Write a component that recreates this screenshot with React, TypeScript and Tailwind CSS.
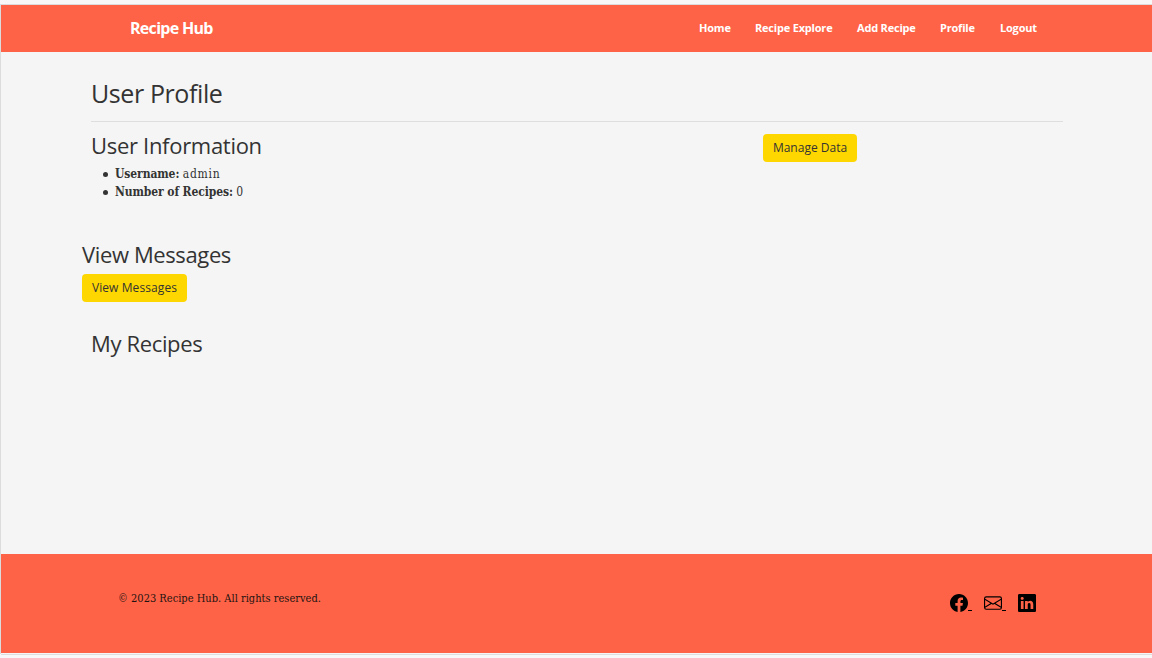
import { BsEnvelope, BsFacebook, BsLinkedin } from "react-icons/bs";

const sans = "font-['Open_Sans',sans-serif]";
const serif = "font-['DejaVu_Serif_Condensed','DejaVu_Serif',serif]";

const links = [
  { label: "Home", style: "w-[32px]" },
  { label: "Recipe Explore", style: "w-[78px]" },
  { label: "Add Recipe", style: "w-[59px]" },
  { label: "Profile", style: "w-[36px]" },
  { label: "Logout", style: "w-[37px]" },
];

function Header() {
  return (
    <header className={`flex h-[47px] items-center justify-between bg-[#ff6347] pl-[129px] pr-[115px] font-bold text-white ${sans}`}>
      <a className="-mt-[2px] whitespace-nowrap text-[16px] tracking-[-0.7px]">Recipe Hub</a>
      <nav className="flex gap-6 text-[11px] tracking-[-0.2px]">
        {links.map((l) => (
          <a key={l.label} className={`whitespace-nowrap ${l.style}`}>{l.label}</a>
        ))}
      </nav>
    </header>
  );
}

function Footer() {
  return (
    <footer className="flex h-[99px] items-start justify-between bg-[#ff6347] pl-[117px] pr-[116px] text-[#1c1311]">
      <p className={`mt-[36px] whitespace-nowrap text-[11px] leading-[18px] ${serif}`}>© 2023 Recipe Hub. All rights reserved.</p>
      <div className="mt-[40px] flex text-black">
        <a className="flex w-[34px] items-end"><BsFacebook size={18} /><span className="mb-px h-px w-[4px] bg-black" /></a>
        <a className="flex w-[34px] items-end"><BsEnvelope size={18} /><span className="mb-px h-px w-[4px] bg-black" /></a>
        <a><BsLinkedin size={18} /></a>
      </div>
    </footer>
  );
}

function Button({ children, className }: { children: string; className: string }) {
  return (
    <button className={`flex h-[28px] items-center justify-center whitespace-nowrap rounded-[4px] bg-[#ffd700] text-[12px] text-[#333] ${sans} ${className}`}>
      {children}
    </button>
  );
}

export default function App() {
  return (
    <div className="flex h-[658px] flex-col bg-[#f8f8f8] pt-1 text-[#333]">
      <div className="flex h-[650px] flex-col border-l border-t border-[#dcdcdc] bg-[#f5f5f5]">
        <Header />
        <main className="h-[502px] pl-[81px] pr-[89px]">
          <h1 className={`ml-[9px] pt-[25px] text-[25px] leading-[32px] tracking-[-0.4px] ${sans}`}>User Profile</h1>
          <hr className="ml-[9px] mt-[12px] border-[#dedede]" />
          <section className="ml-[9px] flex h-[118px]">
            <div className="w-[672px]">
              <h2 className={`mt-[9px] text-[22px] leading-[28px] tracking-[-0.3px] ${sans}`}>User Information</h2>
              <ul className={`mt-[6px] list-none text-[12px] leading-[18px] ${serif}`}>
                <li className="flex items-center pl-[12px]"><span className="mr-[7px] h-[5px] w-[5px] rounded-full bg-[#333]" /><b className="tracking-[-0.1px]">Username:</b>&nbsp;<span className="tracking-[0.75px]">admin</span></li>
                <li className="flex items-center pl-[12px]"><span className="mr-[7px] h-[5px] w-[5px] rounded-full bg-[#333]" /><b className="tracking-[-0.1px]">Number of Recipes:</b>&nbsp;<span>0</span></li>
              </ul>
            </div>
            <Button className="mt-[11.5px] w-[94px]">Manage Data</Button>
          </section>
          <h2 className={`text-[22px] leading-[28px] tracking-[-0.38px] ${sans}`}>View Messages</h2>
          <Button className="mt-[5.5px] w-[105px] tracking-[0.1px]">View Messages</Button>
          <h2 className={`ml-[9px] mt-[27.5px] text-[22px] leading-[28px] tracking-[-0.35px] ${sans}`}>My Recipes</h2>
        </main>
        <Footer />
      </div>
      <div className="ml-px h-px bg-[#dedede]" />
    </div>
  );
}
